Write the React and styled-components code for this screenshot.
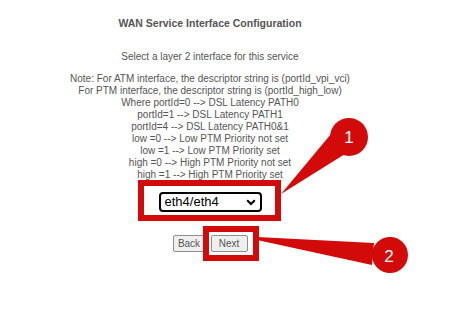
import styled, { createGlobalStyle } from "styled-components";

const GlobalStyle = createGlobalStyle`
  body {
    margin: 0;
    background: #fff;
    font-family: "Liberation Sans", Arial, sans-serif;
  }
`;

const Page = styled.div`
  position: relative;
  width: 451px;
  height: 312px;
  overflow: hidden;
  background: #fff;
`;

const Panel = styled.div`
  width: 420px;
  padding-top: 16px;
  text-align: center;
  color: #555;
`;

const Title = styled.div`
  font-size: 10.5px;
  font-weight: bold;
  line-height: 14px;
`;

const Lead = styled.div`
  margin-top: 20px;
  font-size: 10px;
  line-height: 14px;
`;

const Note = styled.div`
  margin-top: 9px;
  font-size: 10px;
  line-height: 12px;
`;

const Row = styled.div`
  display: flex;
  justify-content: center;
  gap: 5px;
  margin-top: ${(p) => p.$top}px;
`;

const Marked = styled.span`
  position: relative;
  display: inline-flex;
`;

const Frame = styled.span`
  position: absolute;
  top: ${(p) => -p.$t}px;
  right: ${(p) => -p.$r}px;
  bottom: ${(p) => -p.$b}px;
  left: ${(p) => -p.$l}px;
  border: 6px solid #d30a0a;
  pointer-events: none;
`;

const SelectBox = styled.span`
  position: relative;
  display: inline-flex;
`;

const Select = styled.select`
  appearance: none;
  width: 103px;
  height: 20px;
  padding: 0 0 0 4px;
  border: 2px solid #000;
  border-radius: 4px;
  background: #fff;
  color: #000;
  font-family: "Liberation Sans", Arial, sans-serif;
  font-size: 13px;
  line-height: 16px;
  outline: none;
`;

const Chevron = styled.svg`
  position: absolute;
  right: 6px;
  top: 7px;
  pointer-events: none;
`;

const Button = styled.button`
  width: ${(p) => p.$w}px;
  height: 17px;
  padding: 0;
  border: 1px solid #8f8f8f;
  border-radius: 2px;
  background: #efefef;
  color: #555;
  font-family: "Liberation Sans", Arial, sans-serif;
  font-size: 10px;
  line-height: 15px;
`;

const Callouts = styled.svg`
  position: absolute;
  left: 0;
  top: 0;
  pointer-events: none;
`;

const notes = [
  "Note: For ATM interface, the descriptor string is (portId_vpi_vci)",
  "For PTM interface, the descriptor string is (portId_high_low)",
  "Where portId=0 --> DSL Latency PATH0",
  "portId=1 --> DSL Latency PATH1",
  "portId=4 --> DSL Latency PATH0&1",
  "low =0 --> Low PTM Priority not set",
  "low =1 --> Low PTM Priority set",
  "high =0 --> High PTM Priority not set",
  "high =1 --> High PTM Priority set",
];

export default function App() {
  return (
    <>
      <GlobalStyle />
      <Page>
        <Panel>
          <Title>WAN Service Interface Configuration</Title>
          <Lead>Select a layer 2 interface for this service</Lead>
          <Note>
            {notes.map((n) => (
              <div key={n}>{n}</div>
            ))}
          </Note>
          <Row $top={11}>
            <Marked>
              <SelectBox>
                <Select defaultValue="eth4/eth4">
                  <option value="eth4/eth4">eth4/eth4</option>
                </Select>
                <Chevron width="10" height="7" viewBox="0 0 10 7">
                  <path d="M1.2 1.3 L5 5 L8.8 1.3" fill="none" stroke="#000" strokeWidth="2" />
                </Chevron>
              </SelectBox>
              <Frame $t={12} $r={19} $b={9} $l={21} />
            </Marked>
          </Row>
          <Row $top={23}>
            <Button $w={33}>Back</Button>
            <Marked>
              <Button $w={37}>Next</Button>
              <Frame $t={9} $r={11} $b={9} $l={8} />
            </Marked>
          </Row>
        </Panel>
        <Callouts width="451" height="312" viewBox="0 0 451 312">
          <g fill="#d30a0a">
            <polygon points="281,194 331,134 345,154" />
            <circle cx="349" cy="137" r="19" />
            <polygon points="257,237 257,240 372,265 374,243" />
            <circle cx="390" cy="255" r="18" />
          </g>
          <g fill="#fff" fontFamily="Liberation Sans, Arial, sans-serif" fontSize="17" textAnchor="middle">
            <text x="349" y="143">1</text>
            <text x="389" y="262">2</text>
          </g>
        </Callouts>
      </Page>
    </>
  );
}
